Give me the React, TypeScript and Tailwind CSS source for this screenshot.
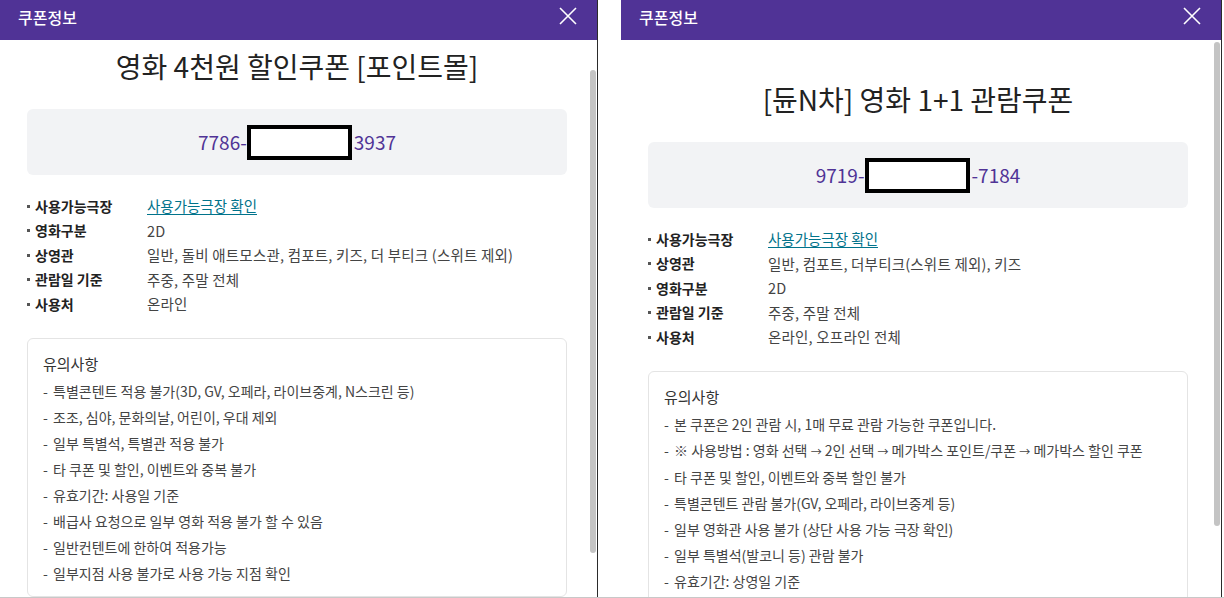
import React from "react";

type Row = { label: string; value: string; link?: boolean };

function CloseIcon() {
  return (
    <svg width="18" height="18" viewBox="0 0 18 18" fill="none">
      <path d="M1 1L17 17M17 1L1 17" stroke="white" strokeWidth="1.6" />
    </svg>
  );
}

function Notice({ text }: { text: string }) {
  const parts = text.split("→");
  return (
    <>
      {parts.map((p, i) => (
        <React.Fragment key={i}>
          {i > 0 && <span className="text-[11px]">→</span>}
          {p}
        </React.Fragment>
      ))}
    </>
  );
}

function Panel({
  width,
  padTop,
  padRight,
  title,
  codeA,
  codeB,
  rows,
  notices,
  thumbTop,
  thumbHeight,
}: {
  width: string;
  padTop: string;
  padRight: string;
  title: string;
  codeA: string;
  codeB: string;
  rows: Row[];
  notices: string[];
  thumbTop: string;
  thumbHeight: string;
}) {
  return (
    <div className={`${width} h-[597px] flex flex-col border-r border-[#2b2b2b] bg-white shrink-0`}>
      <div className="h-[40px] bg-[#503396] flex items-start justify-between pl-[18px] pr-[20px] pt-[6px] shrink-0">
        <span className="text-white text-[16px] leading-[22px] font-medium">쿠폰정보</span>
        <span className="mt-[1px]">
          <CloseIcon />
        </span>
      </div>
      <div className="relative flex-1 overflow-hidden">
        <div className={`absolute right-[1px] w-[6px] rounded-full bg-[#c4c4c4] ${thumbTop} ${thumbHeight}`} />
        <div className={`${padTop} pl-[27px] ${padRight}`}>
          <h2 className="text-center text-[28px] leading-[36px] text-[#222]">{title}</h2>
          <div className="mt-[25px] h-[66px] rounded-[6px] bg-[#f2f3f5] flex items-center justify-center text-[19px] text-[#503396]">
            <span>{codeA}</span>
            <span className="inline-block w-[105px] h-[35px] border-[4px] border-black bg-white" />
            <span className="ml-[2px]">{codeB}</span>
          </div>
          <ul className="mt-[19px] flex flex-col">
            {rows.map((r) => (
              <li key={r.label} className="flex items-center h-[24.5px] text-[14px]">
                <span className="w-[120px] flex items-center font-bold text-[#222]">
                  <span className="w-[3px] h-[3px] bg-[#555] mr-[5px]" />
                  {r.label}
                </span>
                {r.link ? (
                  <span className="text-[#01738b] underline underline-offset-2 text-[14.5px]">{r.value}</span>
                ) : (
                  <span className="text-[#444] text-[14.5px] tracking-[0.2px]">{r.value}</span>
                )}
              </li>
            ))}
          </ul>
          <div className="mt-[21px] border border-[#e4e4e4] rounded-[6px] pl-[15px] pr-[15px] pt-[14px] pb-[10px]">
            <div className="text-[15px] leading-[22px] text-[#333]">유의사항</div>
            <ul className="mt-[3px]">
              {notices.map((n) => (
                <li key={n} className="flex text-[14px] leading-[26px] text-[#444]">
                  <span className="w-[10px] shrink-0">-</span>
                  <span>
                    <Notice text={n} />
                  </span>
                </li>
              ))}
            </ul>
          </div>
        </div>
      </div>
    </div>
  );
}

export default function App() {
  return (
    <div className="w-[1224px] h-[598px] bg-white overflow-hidden font-['Noto_Sans_CJK_KR',sans-serif] border-b border-[#c8c8c8]">
      <div className="flex">
        <Panel
          width="w-[598px]"
          padTop="pt-[8px]"
          padRight="pr-[30px]"
          title="영화 4천원 할인쿠폰 [포인트몰]"
          codeA="7786-"
          codeB="3937"
          thumbTop="top-[30px]"
          thumbHeight="h-[483px]"
          rows={[
            { label: "사용가능극장", value: "사용가능극장 확인", link: true },
            { label: "영화구분", value: "2D" },
            { label: "상영관", value: "일반, 돌비 애트모스관, 컴포트, 키즈, 더 부티크 (스위트 제외)" },
            { label: "관람일 기준", value: "주중, 주말 전체" },
            { label: "사용처", value: "온라인" },
          ]}
          notices={[
            "특별콘텐트 적용 불가(3D, GV, 오페라, 라이브중계, N스크린 등)",
            "조조, 심야, 문화의날, 어린이, 우대 제외",
            "일부 특별석, 특별관 적용 불가",
            "타 쿠폰 및 할인, 이벤트와 중복 불가",
            "유효기간: 사용일 기준",
            "배급사 요청으로 일부 영화 적용 불가 할 수 있음",
            "일반컨텐트에 한하여 적용가능",
            "일부지점 사용 불가로 사용 가능 지점 확인",
          ]}
        />
        <div className="w-[23px] shrink-0" />
        <Panel
          width="w-[601px]"
          padTop="pt-[41px]"
          padRight="pr-[33px]"
          title="[듄N차] 영화 1+1 관람쿠폰"
          codeA="9719-"
          codeB="-7184"
          thumbTop="top-[2px]"
          thumbHeight="h-[484px]"
          rows={[
            { label: "사용가능극장", value: "사용가능극장 확인", link: true },
            { label: "상영관", value: "일반, 컴포트, 더부티크(스위트 제외), 키즈" },
            { label: "영화구분", value: "2D" },
            { label: "관람일 기준", value: "주중, 주말 전체" },
            { label: "사용처", value: "온라인, 오프라인 전체" },
          ]}
          notices={[
            "본 쿠폰은 2인 관람 시, 1매 무료 관람 가능한 쿠폰입니다.",
            "※ 사용방법 : 영화 선택 → 2인 선택 → 메가박스 포인트/쿠폰 → 메가박스 할인 쿠폰",
            "타 쿠폰 및 할인, 이벤트와 중복 할인 불가",
            "특별콘텐트 관람 불가(GV, 오페라, 라이브중계 등)",
            "일부 영화관 사용 불가 (상단 사용 가능 극장 확인)",
            "일부 특별석(발코니 등) 관람 불가",
            "유효기간: 상영일 기준",
          ]}
        />
      </div>
    </div>
  );
}
